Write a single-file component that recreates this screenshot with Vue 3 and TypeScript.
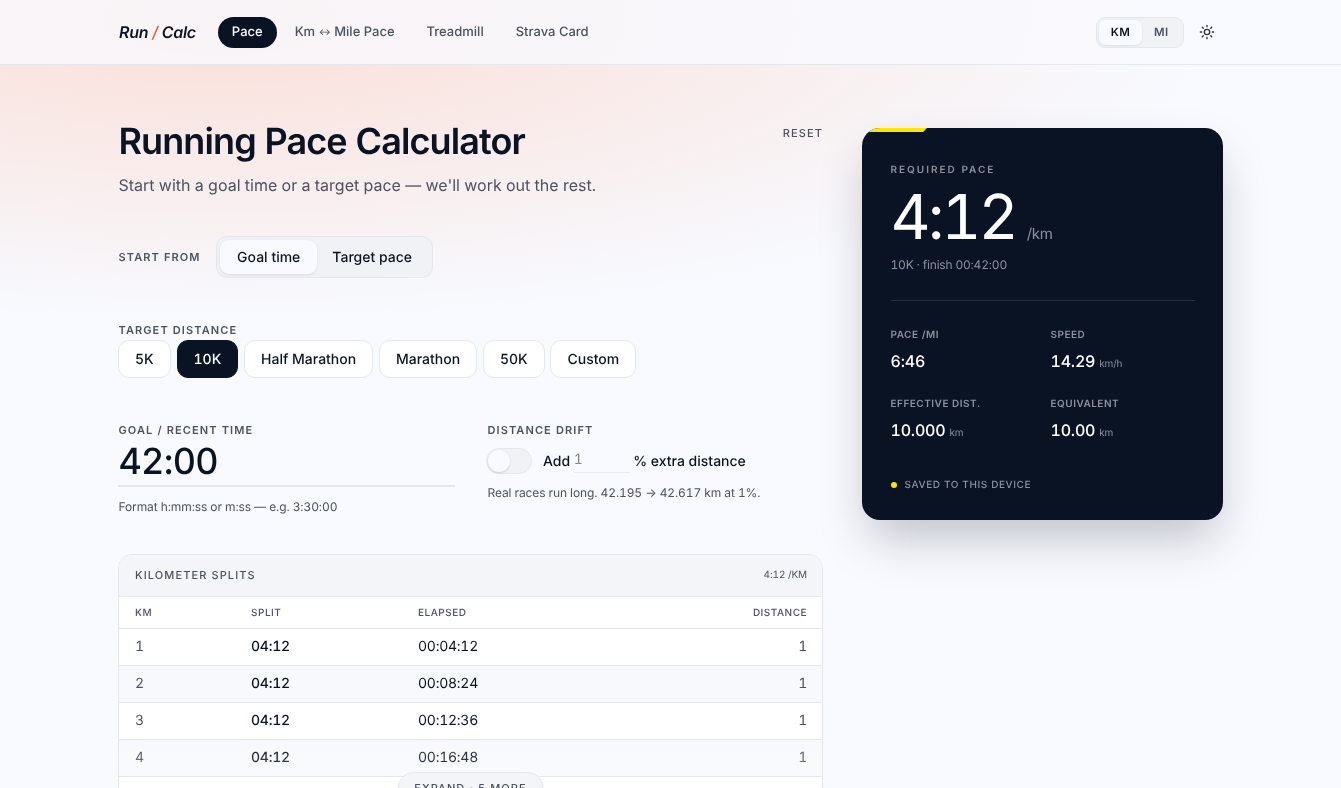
<script setup lang="ts">
import { ref } from 'vue'

const distances = ['5K', '10K', 'Half Marathon', 'Marathon', '50K', 'Custom']
const activeDistance = ref('10K')

const stats = [
  { label: 'Pace /mi', value: '6:46', unit: '' },
  { label: 'Speed', value: '14.29', unit: 'km/h' },
  { label: 'Effective dist.', value: '10.000', unit: 'km' },
  { label: 'Equivalent', value: '10.00', unit: 'km' },
]

const splits = [
  { km: 1, split: '04:12', elapsed: '00:04:12', distance: 1 },
  { km: 2, split: '04:12', elapsed: '00:08:24', distance: 1 },
  { km: 3, split: '04:12', elapsed: '00:12:36', distance: 1 },
  { km: 4, split: '04:12', elapsed: '00:16:48', distance: 1 },
]
</script>

<template>
  <div class="page">
    <header class="topbar">
      <div class="topbar-inner">
        <div class="logo">Run <span class="slash">/</span> Calc</div>
        <nav class="nav">
          <a class="nav-link active">Pace</a>
          <a class="nav-link">Km <span class="arrow">↔</span> Mile Pace</a>
          <a class="nav-link">Treadmill</a>
          <a class="nav-link">Strava Card</a>
        </nav>
        <div class="topbar-right">
          <div class="unit-switch">
            <button class="unit-btn on">KM</button>
            <button class="unit-btn">MI</button>
          </div>
          <button class="theme-btn" aria-label="Toggle theme">
            <svg width="16" height="16" viewBox="0 0 24 24" fill="none" stroke="currentColor" stroke-width="2" stroke-linecap="round">
              <circle cx="12" cy="12" r="4" />
              <path d="M12 2v2M12 20v2M4.93 4.93l1.41 1.41M17.66 17.66l1.41 1.41M2 12h2M20 12h2M4.93 19.07l1.41-1.41M17.66 6.34l1.41-1.41" />
            </svg>
          </button>
        </div>
      </div>
    </header>

    <main class="main">
      <section class="left">
        <div class="hero">
          <div>
            <h1>Running Pace Calculator</h1>
            <p class="lead">Start with a goal time or a target pace — we'll work out the rest.</p>
          </div>
          <button class="reset">RESET</button>
        </div>

        <div class="start-row">
          <span class="label">START FROM</span>
          <div class="mode-switch">
            <button class="mode-btn on">Goal time</button>
            <button class="mode-btn">Target pace</button>
          </div>
        </div>

        <div class="distance-block">
          <div class="label">TARGET DISTANCE</div>
          <div class="chips">
            <button
              v-for="d in distances"
              :key="d"
              class="chip"
              :class="{ on: d === activeDistance }"
              @click="activeDistance = d"
            >{{ d }}</button>
          </div>
        </div>

        <div class="fields">
          <div>
            <div class="label">GOAL / RECENT TIME</div>
            <div class="time-input">42:00</div>
            <div class="hint">Format h:mm:ss or m:ss — e.g. 3:30:00</div>
          </div>
          <div>
            <div class="label">DISTANCE DRIFT</div>
            <div class="drift-row">
              <span class="toggle"><span class="knob"></span></span>
              <span>Add</span>
              <span class="drift-input">1</span>
              <span>% extra distance</span>
            </div>
            <div class="hint drift-hint">Real races run long. 42.195 → 42.617 km at 1%.</div>
          </div>
        </div>

        <div class="splits">
          <div class="splits-head">
            <span class="splits-title">KILOMETER SPLITS</span>
            <span class="splits-pace">4:12 /KM</span>
          </div>
          <table>
            <thead>
              <tr>
                <th class="c-km">KM</th>
                <th class="c-split">SPLIT</th>
                <th>ELAPSED</th>
                <th class="num">DISTANCE</th>
              </tr>
            </thead>
            <tbody>
              <tr v-for="row in splits" :key="row.km">
                <td class="muted">{{ row.km }}</td>
                <td class="strong">{{ row.split }}</td>
                <td class="dark">{{ row.elapsed }}</td>
                <td class="num muted">{{ row.distance }}</td>
              </tr>
            </tbody>
          </table>
          <div class="fade"></div>
          <button class="expand">EXPAND · 5 MORE</button>
        </div>
      </section>

      <aside class="result">
        <span class="accent"></span>
        <div class="result-label">REQUIRED PACE</div>
        <div class="pace"><span class="pace-value">4:12</span><span class="pace-unit">/km</span></div>
        <div class="finish">10K · finish 00:42:00</div>
        <div class="stats">
          <div v-for="s in stats" :key="s.label">
            <div class="stat-label">{{ s.label }}</div>
            <div class="stat-value">{{ s.value }}<small v-if="s.unit">{{ s.unit }}</small></div>
          </div>
        </div>
        <div class="saved"><span class="dot"></span>SAVED TO THIS DEVICE</div>
      </aside>
    </main>
  </div>
</template>

<style>
html,
body {
  margin: 0;
  height: 100%;
  overflow: hidden;
}
</style>

<style scoped>
.page {
  height: 788px;
  overflow: hidden;
  font-family: Inter, 'Noto Sans', sans-serif;
  font-variant-numeric: tabular-nums;
  text-rendering: geometricPrecision;
  color: #0a1324;
  background:
    radial-gradient(ellipse 1000px 300px at 220px 20px, rgba(255, 120, 70, 0.21), rgba(255, 120, 70, 0) 100%),
    #f8faff;
}

button {
  font-family: inherit;
  font-variant-numeric: inherit;
  text-rendering: inherit;
  cursor: pointer;
}

.topbar {
  height: 64px;
  border-bottom: 1px solid #e3e7ef;
  background: rgba(248, 250, 255, 0.78);
}

.topbar-inner {
  width: 1105px;
  height: 100%;
  margin: 0 auto;
  display: flex;
  align-items: center;
  will-change: transform;
}

.logo {
  font-size: 16px;
  font-weight: 600;
  font-style: italic;
  letter-spacing: -0.3px;
  padding-left: 1px;
  margin-right: 22px;
  white-space: pre;
}

.slash {
  color: #f0561d;
  font-weight: 500;
}

.nav {
  display: flex;
  align-items: center;
  gap: 4px;
  margin-top: 1px;
}

.nav-link {
  padding: 8px 14px;
  border-radius: 999px;
  font-size: 13px;
  line-height: 15px;
  font-weight: 500;
  color: #4a5263;
}

.nav-link.active {
  background: #0a1324;
  color: #fff;
}

.arrow {
  font-size: 9px;
  vertical-align: 1px;
}

.topbar-right {
  margin-left: auto;
  display: flex;
  align-items: center;
  gap: 7.5px;
}

.unit-switch {
  display: flex;
  padding: 2px;
  background: #f0f2f6;
  border: 1px solid #e3e7ef;
  border-radius: 9px;
}

.unit-btn {
  height: 25px;
  padding: 0 12px;
  border: 0;
  border-radius: 7px;
  background: transparent;
  color: #4a5263;
  font-size: 11.5px;
  font-weight: 600;
  letter-spacing: 0.3px;
}

.unit-btn.on {
  background: #f8faff;
  color: #0a1324;
  box-shadow: 0 1px 2px rgba(10, 19, 36, 0.08);
}

.theme-btn {
  width: 32px;
  height: 32px;
  padding: 0;
  border: 0;
  background: transparent;
  color: #2a3242;
  display: flex;
  align-items: center;
  justify-content: center;
}

.main {
  width: 1105px;
  margin: 0 auto;
  padding-top: 54px;
  display: grid;
  grid-template-columns: 705px 361px;
  gap: 39px;
  align-items: start;
  will-change: transform;
}

.hero {
  display: flex;
  justify-content: space-between;
  align-items: flex-start;
}

h1 {
  margin: 0;
  padding-left: 0.5px;
  font-size: 36px;
  line-height: 44px;
  font-weight: 600;
  letter-spacing: -0.9px;
  color: #0a1324;
}

.lead {
  margin: 10px 0 0;
  padding-left: 0.5px;
  font-size: 16px;
  line-height: 24px;
  color: #4a5263;
}

.reset {
  border: 0;
  background: none;
  padding: 0;
  margin-top: 6px;
  font-size: 11px;
  line-height: 16px;
  font-weight: 500;
  letter-spacing: 1.1px;
  color: #4a5263;
}

.label {
  padding-left: 0.5px;
  font-size: 11px;
  line-height: 14px;
  font-weight: 600;
  letter-spacing: 1.1px;
  color: #4a5263;
}

.start-row {
  margin-top: 39px;
  display: flex;
  align-items: center;
  gap: 15.5px;
}

.mode-switch {
  display: flex;
  padding: 3px;
  background: #f0f2f6;
  border: 1px solid #e3e7ef;
  border-radius: 11px;
}

.mode-btn {
  height: 34px;
  padding: 0 17px 0 15px;
  border: 0;
  border-radius: 9px;
  background: transparent;
  font-size: 14px;
  font-weight: 500;
  color: #0a1324;
}

.mode-btn.on {
  padding: 0 17px;
  background: #f8faff;
  box-shadow: 0 1px 3px rgba(10, 19, 36, 0.1);
}

.distance-block {
  margin-top: 45px;
}

.chips {
  display: flex;
  gap: 5.8px;
  margin-top: 3px;
}

.chip {
  height: 38px;
  padding: 0 16px;
  border: 1px solid #e3e7ef;
  border-radius: 11px;
  background: #fff;
  font-size: 14px;
  font-weight: 500;
  color: #0a1324;
}

.chip.on {
  background: #0a1324;
  border-color: #0a1324;
  color: #fff;
}

.fields {
  margin-top: 45px;
  display: grid;
  grid-template-columns: 337px 1fr;
  gap: 32px;
}

.time-input {
  margin-top: 3px;
  height: 42px;
  line-height: 42px;
  font-size: 36px;
  font-weight: 500;
  letter-spacing: -0.72px;
  text-indent: 0.5px;
  color: #0a1324;
  border-bottom: 2px solid #e3e7ef;
  padding-bottom: 3px;
}

.hint {
  margin-top: 11px;
  padding-left: 0.5px;
  font-size: 12px;
  line-height: 18px;
  letter-spacing: -0.1px;
  color: #4a5263;
}

.drift-row {
  margin-top: 11px;
  display: flex;
  align-items: center;
  height: 26px;
  font-size: 14px;
  font-weight: 500;
  color: #0a1324;
}

.toggle {
  box-sizing: border-box;
  width: 46px;
  height: 26px;
  margin: 0 11px 0 -1px;
  border-radius: 999px;
  background: #f0f2f6;
  border: 1px solid #e3e7ef;
  padding: 1px;
}

.knob {
  display: block;
  width: 22px;
  height: 22px;
  border-radius: 50%;
  background: #f8faff;
  box-shadow: 0 1px 2px rgba(10, 19, 36, 0.15);
}

.drift-input {
  box-sizing: border-box;
  width: 56px;
  margin: 0 3.5px;
  padding-top: 1px;
  height: 23px;
  border-bottom: 1px solid #e9ecf2;
  color: #7f8695;
  font-weight: 400;
}

.drift-hint {
  margin-top: 10px;
}

.splits {
  position: relative;
  margin-top: 38px;
  height: 300px;
  border: 1px solid #e3e7ef;
  border-radius: 14px;
  background: #fff;
  overflow: hidden;
}

.splits-head {
  box-sizing: border-box;
  height: 42px;
  padding: 0 15px 1px 16px;
  display: flex;
  align-items: center;
  justify-content: space-between;
  background: #f3f5f9;
  border-bottom: 1px solid #e3e7ef;
}

.splits-title {
  font-size: 11px;
  font-weight: 500;
  letter-spacing: 1.1px;
  color: #4a5263;
}

.splits-pace {
  font-size: 10px;
  letter-spacing: -0.1px;
  color: #4a5263;
}

table {
  width: 100%;
  border-collapse: collapse;
  table-layout: fixed;
}

th {
  height: 31px;
  padding: 0;
  text-align: left;
  font-size: 10px;
  font-weight: 500;
  letter-spacing: 0.5px;
  color: #4a5263;
  border-bottom: 1px solid #e3e7ef;
}

th.c-km,
td:first-child {
  width: 116px;
  padding-left: 16px;
}

th.c-split {
  width: 167px;
}

td {
  height: 35px;
  padding: 0 0 1px;
  font-size: 14px;
  letter-spacing: -0.25px;
  border-bottom: 1px solid #e3e7ef;
}

.num {
  text-align: right;
  padding-right: 15px;
}

.muted {
  color: #4a5263;
}

.strong {
  font-weight: 500;
  color: #0a1324;
}

.dark {
  color: #0a1324;
}

tbody tr:nth-child(even) {
  background: #f8f9fc;
}

.fade {
  position: absolute;
  left: 0;
  right: 0;
  top: 181px;
  height: 40px;
  background: linear-gradient(to bottom, rgba(255, 255, 255, 0), rgba(255, 255, 255, 0.25));
}

.expand {
  position: absolute;
  top: 217px;
  left: 50%;
  transform: translateX(-50%);
  height: 32px;
  padding: 0 16px;
  border: 1px solid #e3e7ef;
  border-radius: 999px;
  background: #f3f5f9;
  font-size: 11px;
  font-weight: 500;
  letter-spacing: 1.1px;
  color: #4a5263;
}

.result {
  position: relative;
  box-sizing: border-box;
  height: 392px;
  padding: 36px 28px 0 28.5px;
  margin-top: 9px;
  background: #0a1324;
  border-radius: 18px;
  box-shadow: 0 24px 50px -8px rgba(15, 18, 30, 0.26);
  color: #fff;
  overflow: hidden;
}

.accent {
  position: absolute;
  top: 0;
  left: 0;
  width: 65px;
  height: 4px;
  background: #ffe600;
  clip-path: polygon(0 0, 100% 0, 94% 100%, 0 100%);
}

.result-label {
  font-size: 10px;
  line-height: 12px;
  font-weight: 600;
  letter-spacing: 2px;
  color: #8b919d;
}

.pace {
  margin-top: 9px;
  display: flex;
  align-items: baseline;
  gap: 11px;
}

.pace-value {
  font-size: 62px;
  line-height: 64px;
  font-weight: 400;
  letter-spacing: -3px;
}

.pace-unit {
  font-size: 15px;
  letter-spacing: -0.3px;
  color: #8b919d;
}

.finish {
  margin-top: 7px;
  font-size: 12px;
  line-height: 18px;
  letter-spacing: -0.2px;
  color: #8b919d;
}

.stats {
  margin-top: 26px;
  padding-top: 27px;
  border-top: 1px solid rgba(255, 255, 255, 0.12);
  display: grid;
  grid-template-columns: 160px 1fr;
  row-gap: 23px;
}

.stat-label {
  font-size: 10px;
  line-height: 14px;
  font-weight: 600;
  letter-spacing: 0.5px;
  text-transform: uppercase;
  color: #8b919d;
}

.stat-value {
  margin-top: 9px;
  font-size: 16px;
  line-height: 20px;
  font-weight: 500;
  letter-spacing: -0.2px;
  color: #fff;
}

.stat-value small {
  margin-left: 4px;
  font-size: 10px;
  font-weight: 400;
  color: #8b919d;
}

.saved {
  margin-top: 35px;
  display: flex;
  align-items: center;
  gap: 8px;
  font-size: 10px;
  line-height: 14px;
  font-weight: 500;
  letter-spacing: 0.6px;
  color: #8b919d;
}

.dot {
  width: 6px;
  height: 6px;
  border-radius: 50%;
  background: #ffe600;
}
</style>
